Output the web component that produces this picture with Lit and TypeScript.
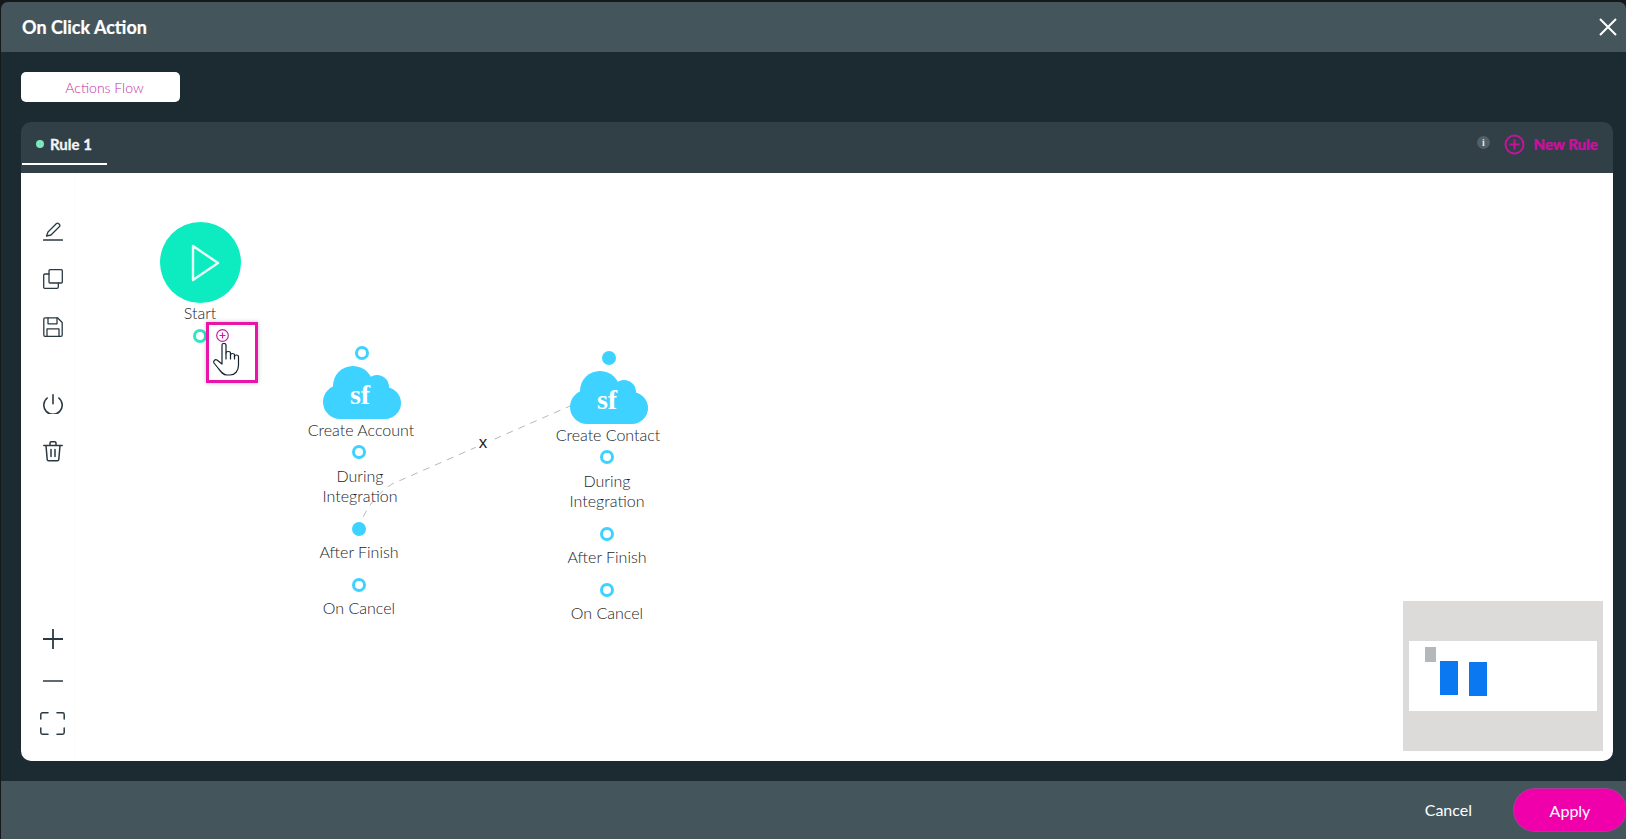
import { LitElement, html, svg, css } from "lit";
import { customElement } from "lit/decorators.js";

const OX = 76;
const OY = 173;

const ports = [
  { x: 200, y: 336, c: "green", f: false },
  { x: 362, y: 353, c: "blue", f: false },
  { x: 359, y: 452, c: "blue", f: false },
  { x: 359, y: 529, c: "blue", f: true },
  { x: 359, y: 585, c: "blue", f: false },
  { x: 609, y: 358, c: "blue", f: true },
  { x: 607, y: 457, c: "blue", f: false },
  { x: 607, y: 534, c: "blue", f: false },
  { x: 607, y: 590, c: "blue", f: false },
];

const labels = [
  { x: 200, y: 313, t: "Start" },
  { x: 361, y: 430, t: "Create Account" },
  { x: 360, y: 476, t: "During" },
  { x: 360, y: 496, t: "Integration" },
  { x: 359, y: 552, t: "After Finish" },
  { x: 359, y: 608, t: "On Cancel" },
  { x: 608, y: 435, t: "Create Contact" },
  { x: 607, y: 481, t: "During" },
  { x: 607, y: 501, t: "Integration" },
  { x: 607, y: 557, t: "After Finish" },
  { x: 607, y: 613, t: "On Cancel" },
];

const clouds = [
  { x: 323, y: 366 },
  { x: 570, y: 371 },
];

@customElement("app-root")
export class AppRoot extends LitElement {
  static styles = css`
    :host { display: block; height: 100vh; overflow: hidden; background: #15191c; font-family: Lato, "Liberation Sans", sans-serif; }
    .dialog { height: calc(100% - 2px); margin: 2px 0 0 1px; display: flex; flex-direction: column; border-radius: 7px 7px 0 0; overflow: hidden; background: #1c2a31; }
    .header { height: 50px; flex: none; background: #45555c; display: flex; align-items: center; justify-content: space-between; padding: 0 9px 0 21px; color: #fff; font-size: 18px; font-weight: 700; -webkit-text-stroke: 0.2px #fff; }
    .close { display: block; }
    .body { flex: 1; min-height: 0; display: flex; flex-direction: column; align-items: flex-start; padding: 20px 13px 20px 20px; gap: 20px; }
    .flow-btn { width: 159px; height: 30px; box-sizing: border-box; padding-left: 8px; background: #fff; border-radius: 5px; color: #c62da0; font-size: 14px; font-weight: 300; display: flex; align-items: center; justify-content: center; }
    .panel { flex: 1; min-height: 0; align-self: stretch; display: flex; flex-direction: column; }
    .tabs { height: 51px; flex: none; background: #313f47; border-radius: 10px 10px 0 0; display: flex; align-items: flex-start; padding-left: 1px; }
    .tab { width: 85px; height: 43px; box-sizing: border-box; border-bottom: 2px solid #fff; display: flex; align-items: center; padding: 2px 0 0 14px; gap: 6px; color: #f4f6f6; font-size: 15px; font-weight: 700; -webkit-text-stroke: 0.3px #f4f6f6; }
    .dot { width: 8px; height: 8px; border-radius: 50%; background: #7de8bb; }
    .tools { margin-left: auto; display: flex; align-items: center; height: 44px; padding-right: 15px; }
    .info { width: 13px; height: 13px; border-radius: 50%; background: #515f66; color: #e4e8e9; font: 700 10px/13px "Liberation Serif", serif; text-align: center; margin: 0 14px 4px 0; }
    .new-rule { display: flex; align-items: center; gap: 9px; color: #c9109f; font-size: 15px; font-weight: 700; text-shadow: 0 0 1px #c9109f; }
    .canvas { flex: 1; min-height: 0; display: flex; background: #fff; border-radius: 0 0 10px 10px; overflow: hidden; }
    .side { width: 55px; flex: none; box-sizing: border-box; border-right: 1px solid #fbfbfb; padding: 35px 0 17px 9px; display: flex; flex-direction: column; align-items: center; color: #2b3a42; }
    .tool { height: 47.5px; display: flex; align-items: center; justify-content: center; }
    .tool.gap { margin-top: 30px; }
    .tool.low { height: 42px; }
    .low-first { margin-top: auto; }
    .tool svg { display: block; }
    .stage { flex: 1; position: relative; }
    .wires { position: absolute; left: 0; top: 0; width: 100%; height: 100%; }
    .start { position: absolute; width: 81px; height: 81px; border-radius: 50%; background: #0cecc0; left: 84px; top: 49px; display: flex; align-items: center; justify-content: center; padding-left: 9px; box-sizing: border-box; }
    .port { position: absolute; width: 14px; height: 14px; box-sizing: border-box; border-radius: 50%; border: 3px solid; background: #fff; transform: translate(-50%, -50%); }
    .port.blue { border-color: #3dd2ff; }
    .port.green { border-color: #2ee5c4; }
    .port.filled { background: #3dd2ff; }
    .label { position: absolute; transform: translate(-50%, -50%); font-size: 16px; font-weight: 300; color: #1c1c1c; white-space: nowrap; line-height: 20px; }
    .cloud { position: absolute; width: 78px; height: 53px; }
    .x-mark { position: absolute; left: 407px; top: 260px; transform: translate(-50%, 0); font-size: 17px; line-height: 20px; color: #222; background: #fff; padding: 0 3px; font-family: "Liberation Sans", sans-serif; }
    .highlight { position: absolute; left: 130px; top: 149px; width: 52px; height: 61px; box-sizing: border-box; border: 3px solid #e815a8; box-shadow: 0 0 4px rgba(0,0,0,.25); }
    .add { position: absolute; left: 140px; top: 156px; }
    .hand { position: absolute; left: 137px; top: 170px; }
    .mini { position: absolute; right: 10px; bottom: 10px; width: 200px; height: 150px; background: #dcdbd9; box-sizing: border-box; padding: 40px 6px; }
    .mini-sheet { position: relative; height: 70px; background: #fff; }
    .mini-item { position: absolute; }
    .mini-start { left: 16px; top: 6px; width: 11px; height: 15px; background: #b5b8ba; }
    .mini-a { left: 31px; top: 20px; width: 18px; height: 34px; background: #0a78f0; }
    .mini-b { left: 60px; top: 21px; width: 18px; height: 34px; background: #0a78f0; }
    .footer { height: 58px; flex: none; background: #45555c; display: flex; align-items: center; justify-content: flex-end; color: #fff; font-size: 16px; }
    .cancel { margin-right: 42px; padding-bottom: 1px; }
    .apply { width: 112px; height: 42px; border-radius: 21px; background: #f000aa; box-shadow: 0 0 0 1px #a83c98; display: flex; align-items: center; justify-content: center; }
  `;

  private icon(body: unknown, w = 20, h = 20, vb = "0 0 20 20", sw = 1.3) {
    return html`<svg width=${w} height=${h} viewBox=${vb} fill="none" stroke="currentColor" stroke-width=${sw} stroke-linecap="round" stroke-linejoin="round">${body}</svg>`;
  }

  render() {
    return html`
      <div class="dialog">
        <div class="header">
          <span>On Click Action</span>
          <svg class="close" width="18" height="18" viewBox="0 0 18 18" stroke="#fff" stroke-width="2"><path d="M1 1 17 17M17 1 1 17"/></svg>
        </div>
        <div class="body">
          <div class="flow-btn">Actions Flow</div>
          <div class="panel">
            <div class="tabs">
              <div class="tab"><span class="dot"></span><span>Rule 1</span></div>
              <div class="tools">
                <div class="info">i</div>
                <div class="new-rule">
                  <svg width="21" height="21" viewBox="0 0 21 21" fill="none" stroke="#c9109f" stroke-width="2"><circle cx="10.5" cy="10.5" r="9"/><path d="M5.5 10.5h10M10.5 5.5v10"/></svg>
                  <span>New Rule</span>
                </div>
              </div>
            </div>
            <div class="canvas">
              <div class="side">
                <div class="tool">${this.icon(svg`<path d="M3.5 14 5 10 13.5 1.5a1.4 1.4 0 0 1 2 0l1 1a1.4 1.4 0 0 1 0 2L8 13Z"/><path d="M0.5 18h19"/>`)}</div>
                <div class="tool">${this.icon(svg`<rect x="6" y="0.7" width="13.3" height="13.3" rx="1"/><path d="M6 5H2a1.3 1.3 0 0 0-1.3 1.3v12a1.3 1.3 0 0 0 1.3 1H14a1.3 1.3 0 0 0 1.3-1.3V14"/>`)}</div>
                <div class="tool">${this.icon(svg`<path d="M2 .8h12.5L19.2 5.5V18a1.3 1.3 0 0 1-1.3 1.3H2A1.3 1.3 0 0 1 .8 18V2A1.3 1.3 0 0 1 2 .8Z"/><path d="M5 .8v6h9v-6M4 19.2v-7.4h12v7.4"/>`)}</div>
                <div class="tool gap">${this.icon(svg`<path d="M10 .8v9"/><path d="M4.2 4A9.2 9.2 0 1 0 15.8 4"/>`, 20, 20, "0 0 20 20", 1.6)}</div>
                <div class="tool">${this.icon(svg`<path d="M.8 4.5h18.4M7 4.5V2a1.2 1.2 0 0 1 1.2-1.2h3.6A1.2 1.2 0 0 1 13 2v2.5M3 4.5l1.2 14a1.4 1.4 0 0 0 1.4 1.3h8.8a1.4 1.4 0 0 0 1.4-1.3l1.2-14M8 8.5v7M12 8.5v7"/>`, 20, 21, "0 0 20 21", 1.5)}</div>
                <div class="tool low low-first">${this.icon(svg`<path d="M10 0v20M0 10h20" stroke-linecap="butt"/>`, 20, 20, "0 0 20 20", 1.8)}</div>
                <div class="tool low">${this.icon(svg`<path d="M0 10h20" stroke-linecap="butt"/>`)}</div>
                <div class="tool low">${this.icon(svg`<path d="M8 .8H2.5A1.7 1.7 0 0 0 .8 2.5V7M17 .8h5.5a1.7 1.7 0 0 1 1.7 1.7V7M8 22.2H2.5A1.7 1.7 0 0 1 .8 20.5V16M17 22.2h5.5a1.7 1.7 0 0 0 1.7-1.7V16"/>`, 25, 23, "0 0 25 23", 1.5)}</div>
              </div>
              <div class="stage">
                <svg class="wires" fill="none">
                  <path d=${`M${359 - OX} ${529 - OY} C ${362 - OX} ${516 - OY}, ${372 - OX} ${497 - OY}, ${392 - OX} ${484 - OY} L ${570 - OX} ${406 - OY}`} stroke="#b8b8b8" stroke-width="1" stroke-dasharray="7 6"/>
                </svg>
                <div class="start">
                  <svg width="30" height="38" viewBox="0 0 30 38" fill="none" stroke="#e8fff9" stroke-width="2.4" stroke-linejoin="round"><path d="M3 2 28 19 3 36Z"/></svg>
                </div>
                ${clouds.map((c) => html`
                  <svg class="cloud" style=${`left:${c.x - OX}px;top:${c.y - OY}px`} viewBox="0 0 78 53">
                    <g fill="#3dd2ff"><circle cx="17" cy="36" r="17"/><circle cx="30" cy="20" r="20"/><circle cx="54" cy="21" r="12"/><circle cx="62" cy="37" r="16"/><rect x="17" y="25" width="45" height="28"/></g>
                    <text x="37" y="38" text-anchor="middle" fill="#fff" font-family="'Liberation Serif', serif" font-weight="700" font-size="28">sf</text>
                  </svg>`)}
                ${ports.map((p) => html`<div class="port ${p.c} ${p.f ? "filled" : ""}" style=${`left:${p.x - OX}px;top:${p.y - OY}px`}></div>`)}
                ${labels.map((l) => html`<div class="label" style=${`left:${l.x - OX}px;top:${l.y - OY}px`}>${l.t}</div>`)}
                <div class="x-mark">x</div>
                <div class="highlight"></div>
                <svg class="add" width="13" height="13" viewBox="0 0 13 13" fill="none" stroke="#c81ea5" stroke-width="1.2"><circle cx="6.5" cy="6.5" r="5.8"/><path d="M3.5 6.5h6M6.5 3.5v6"/></svg>
                <svg class="hand" width="27" height="33" viewBox="0 0 27 33" fill="#fff" stroke="#15202b" stroke-width="1.2" stroke-linejoin="round" stroke-linecap="round">
                  <path d="M9 2C9 0 13 0 13 2V10C13 8 17.5 8 17.5 10V12C17.5 10 21.5 10 21.5 12V13.5C21.5 11.5 25.5 11.5 25.5 13.5V22C25.5 28 22 32 17 32H14C10 32 8 29 5 25L1 20C0 18 2 16 4 17L9 21Z"/>
                  <path d="M13 10V16M17.5 11V16M21.5 12.5V16" fill="none"/>
                </svg>
                <div class="mini">
                  <div class="mini-sheet">
                    <div class="mini-item mini-start"></div>
                    <div class="mini-item mini-a"></div>
                    <div class="mini-item mini-b"></div>
                  </div>
                </div>
              </div>
            </div>
          </div>
        </div>
        <div class="footer">
          <span class="cancel">Cancel</span>
          <div class="apply">Apply</div>
        </div>
      </div>
    `;
  }
}
